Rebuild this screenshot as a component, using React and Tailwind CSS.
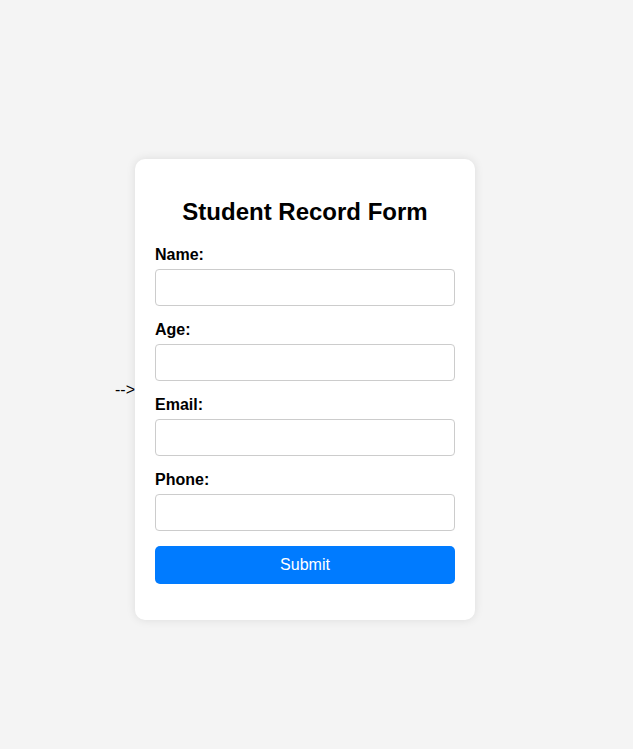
export default function App() {
  const fields = ["Name:", "Age:", "Email:", "Phone:"];
  return (
    <div className="h-[749px] w-full bg-[#f4f4f4] flex items-center pl-[115px] pt-[30px] font-['Liberation_Sans',Arial,sans-serif] text-black">
      <span className="text-[16px] leading-[18px]">--&gt;</span>
      <div className="w-[340px] h-[461px] bg-white rounded-[10px] shadow-[0_0_10px_rgba(0,0,0,0.1)] p-[20px] flex flex-col">
        <h2 className="text-[24px] font-bold text-center leading-[28px] mt-[19px] mb-[20px]">Student Record Form</h2>
        {fields.map((f) => (
          <div key={f} className="flex flex-col">
            <label className="text-[16px] font-bold leading-[18px] mb-[5px]">{f}</label>
            <input className="h-[37px] w-full border border-[#ccc] rounded-[4px] mb-[15px] px-2 outline-none" />
          </div>
        ))}
        <button className="h-[38px] w-full bg-[#007bff] text-white text-[16px] rounded-[5px]">Submit</button>
      </div>
    </div>
  );
}
